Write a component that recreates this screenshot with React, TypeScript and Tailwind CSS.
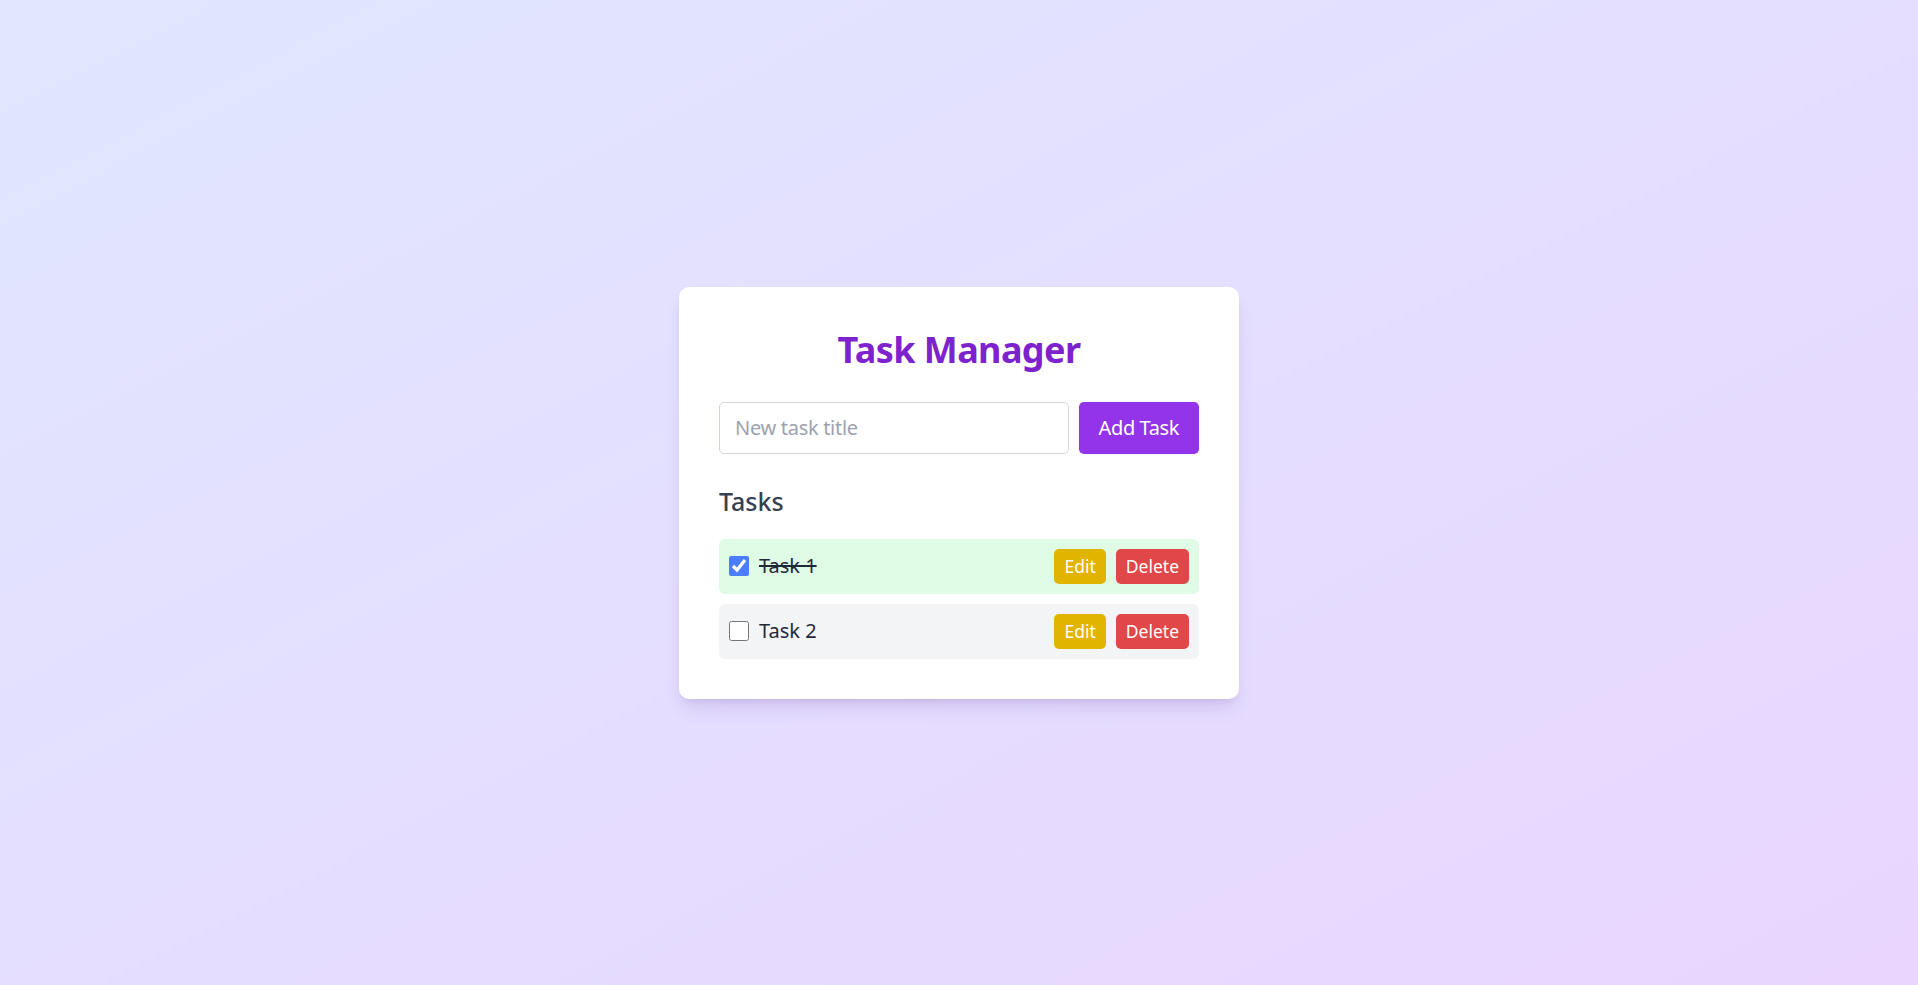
import { useState } from "react";

type Task = { id: number; title: string; done: boolean };

const initialTasks: Task[] = [
  { id: 1, title: "Task 1", done: true },
  { id: 2, title: "Task 2", done: false },
];

const App: React.FC = () => {
  const [tasks, setTasks] = useState<Task[]>(initialTasks);
  const [title, setTitle] = useState("");

  const addTask = () => {
    if (!title.trim()) return;
    setTasks([...tasks, { id: Date.now(), title: title.trim(), done: false }]);
    setTitle("");
  };

  const toggle = (id: number) => {
    setTasks(tasks.map((t) => (t.id === id ? { ...t, done: !t.done } : t)));
  };

  const remove = (id: number) => {
    setTasks(tasks.filter((t) => t.id !== id));
  };

  return (
    <div className="min-h-screen flex items-center justify-center bg-linear-to-br from-[#e0e7ff] to-[#e9d5ff] font-['Segoe_UI','Noto_Sans',sans-serif]">
      <div className="w-[560px] bg-white rounded-[10px] p-[40px] shadow-[0_12px_19px_-4px_rgba(60,20,120,0.12),0_5px_8px_-5px_rgba(60,20,120,0.12)]">
        {/* Header */}
        <h1 className="text-[36px] leading-[45px] tracking-[-0.6px] font-bold text-center text-[#7e22ce] mb-[30px]">
          Task Manager
        </h1>

        {/* New task form */}
        <div className="flex gap-[10px] mb-[30px]">
          <input
            type="text"
            value={title}
            onChange={(e) => setTitle(e.target.value)}
            placeholder="New task title"
            className="flex-1 h-[52px] border border-[#d1d5db] rounded-[5px] px-[15px] text-[20px] tracking-[-0.3px] text-[#1f2937] placeholder:text-[#9ca3af] outline-none"
          />
          <button
            onClick={addTask}
            className="h-[52px] px-[20px] bg-[#9333ea] text-white text-[20px] tracking-[-0.4px] rounded-[5px]"
          >
            Add Task
          </button>
        </div>

        {/* Task list */}
        <h2 className="text-[25px] leading-[35px] font-medium text-[#374151] mb-[20px]">Tasks</h2>
        <ul className="flex flex-col gap-[10px]">
          {tasks.map((task) => (
            <li
              key={task.id}
              className={
                task.done
                  ? "flex items-center justify-between p-[10px] rounded-[6px] bg-[#dffbe6]"
                  : "flex items-center justify-between p-[10px] rounded-[6px] bg-[#f3f4f6]"
              }
            >
              <div className="flex items-center gap-[10px]">
                <input
                  type="checkbox"
                  checked={task.done}
                  onChange={() => toggle(task.id)}
                  className="w-[20px] h-[20px] accent-[#4a7dff]"
                />
                <span
                  className={
                    task.done
                      ? "text-[20px] text-[#1f2937] line-through"
                      : "text-[20px] text-[#1f2937]"
                  }
                >
                  {task.title}
                </span>
              </div>
              <div className="flex gap-[10px]">
                <button className="h-[35px] px-[10px] bg-[#e1b400] text-white text-[17.5px] rounded-[5px]">
                  Edit
                </button>
                <button
                  onClick={() => remove(task.id)}
                  className="h-[35px] px-[10px] bg-[#e04749] text-white text-[17.5px] rounded-[5px]"
                >
                  Delete
                </button>
              </div>
            </li>
          ))}
        </ul>
      </div>
    </div>
  );
};

export default App;
